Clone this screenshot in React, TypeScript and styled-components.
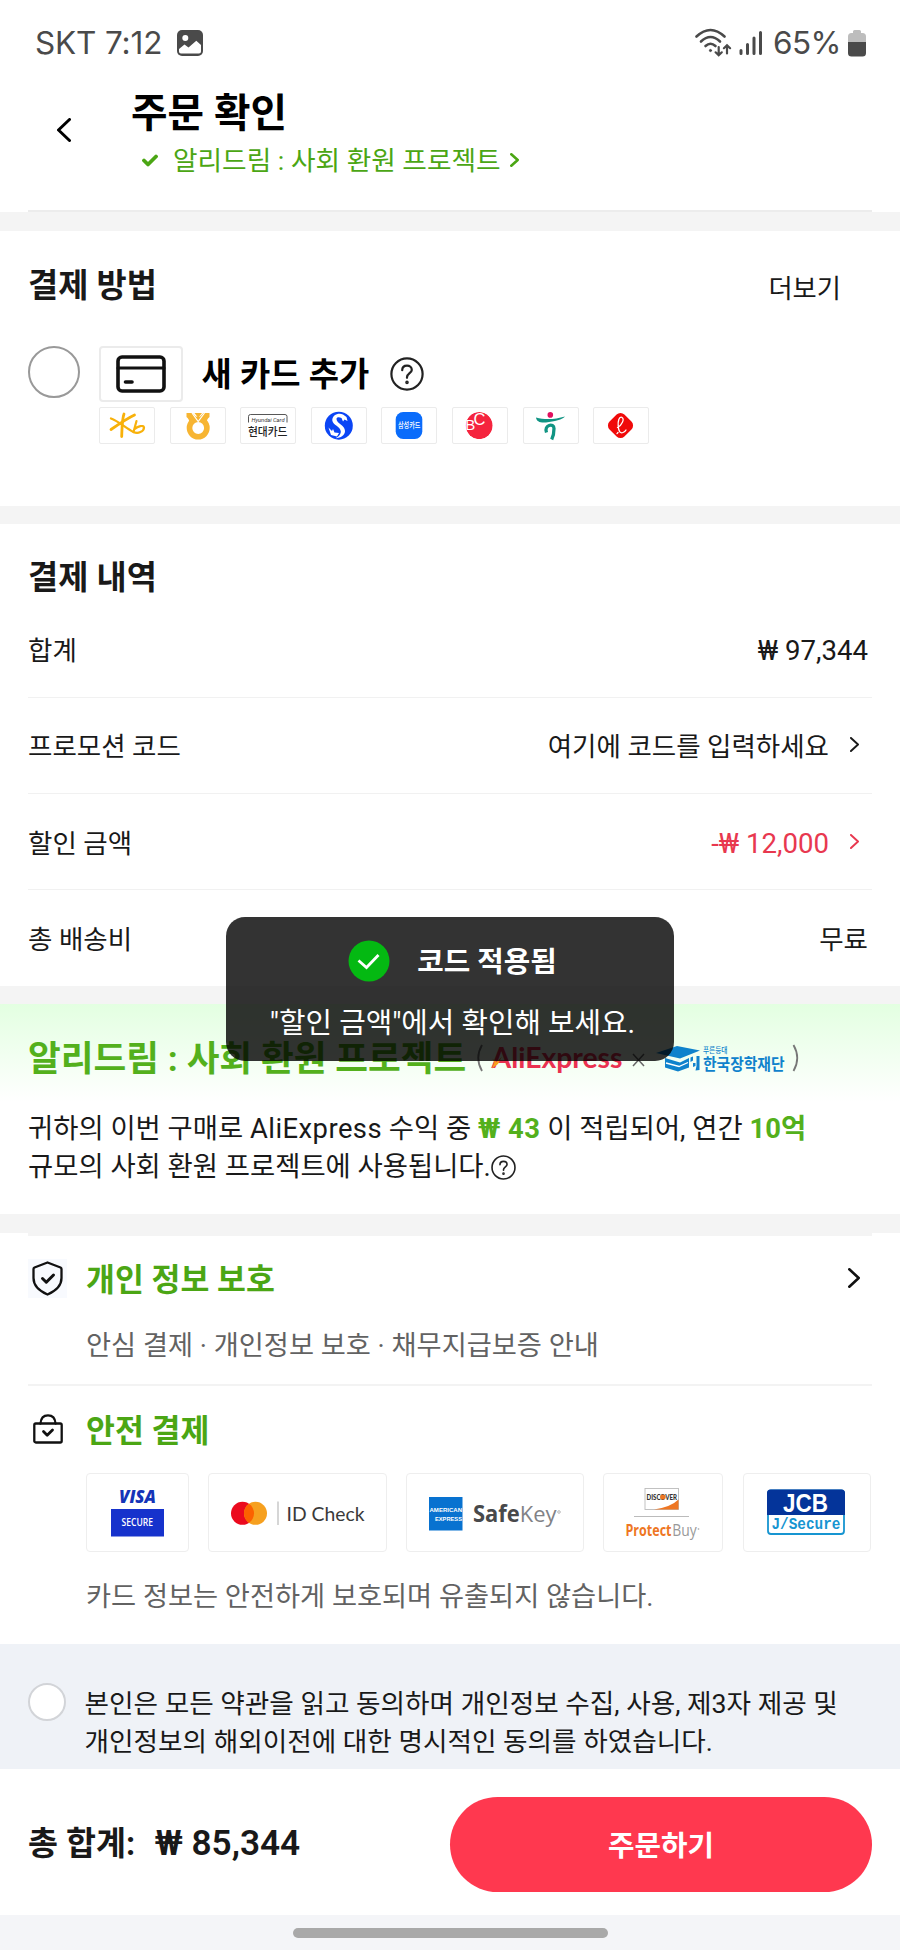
import React from 'react';
import styled, { createGlobalStyle } from 'styled-components';

const GlobalStyle = createGlobalStyle`
  * { box-sizing: border-box; }
  body {
    margin: 0;
    background: #fff;
    font-family: Roboto, "Noto Sans CJK KR", sans-serif;
    color: #191919;
  }
  svg { display: block; flex: none; }
`;

const KR = 'Roboto, "Noto Sans CJK KR", sans-serif';

const Screen = styled.div`
  width: 900px;
  height: 1950px;
  background: #fff;
  position: relative;
  overflow: hidden;
  display: flex;
  flex-direction: column;
  white-space: nowrap;
`;

const StatusBar = styled.header`
  height: 86px;
  flex: none;
  padding: 0 34px 0 35px;
  display: flex;
  align-items: center;
  justify-content: space-between;
  color: #4a4a4a;
  font-family: Inter, Roboto, sans-serif;
  font-size: 31.5px;
`;

const StatusGroup = styled.div<{ $gap: number }>`
  display: flex;
  align-items: center;
  gap: ${p => p.$gap}px;
`;

const StatusText = styled.span<{ $track: number; $left?: number }>`
  letter-spacing: ${p => p.$track}px;
  margin-left: ${p => p.$left ?? 0}px;
  line-height: 40px;
`;

const TitleBar = styled.div`
  height: 124px;
  flex: none;
  display: flex;
  padding-left: 57px;
`;

const BackButton = styled.div`
  width: 74px;
  padding-top: 32px;
`;

const TitleColumn = styled.div`
  display: flex;
  flex-direction: column;
`;

const PageTitle = styled.h1`
  margin: 4px 0 0;
  font-size: 39.7px;
  font-weight: 700;
  line-height: 48px;
  color: #000;
`;

const ProjectLink = styled.div`
  display: flex;
  align-items: center;
  height: 40px;
  margin-top: 2px;
  padding-left: 11px;
  font-size: 26.7px;
  color: #4ba614;
`;

const LinkLabel = styled.span`
  margin: 0 9px 0 15px;
  padding-bottom: 4px;
`;

const Inset = styled.div<{ $h: number; $color: string }>`
  height: ${p => p.$h}px;
  flex: none;
  margin: 0 28px;
  background: ${p => p.$color};
`;

const Band = styled.div<{ $h: number }>`
  height: ${p => p.$h}px;
  flex: none;
  background: #f4f4f4;
`;

const PaymentSection = styled.section`
  height: 275px;
  flex: none;
  padding: 33px 59px 0 28px;
`;

const SectionHead = styled.div`
  display: flex;
  justify-content: space-between;
  align-items: center;
  height: 44px;
`;

const SectionTitle = styled.h2`
  margin: 0;
  font-size: 32.8px;
  font-weight: 700;
  line-height: 44px;
`;

const MoreLink = styled.span`
  font-size: 26.3px;
`;

const MethodRow = styled.div`
  display: flex;
  margin-top: 38px;
`;

const Radio = styled.span<{ $size: number; $border: string }>`
  width: ${p => p.$size}px;
  height: ${p => p.$size}px;
  flex: none;
  border-radius: 50%;
  border: 2px solid ${p => p.$border};
  background: #fff;
`;

const MethodBody = styled.div`
  margin-left: 19px;
`;

const NewCard = styled.div`
  display: flex;
  align-items: center;
  height: 56px;
`;

const CardThumb = styled.div`
  width: 84px;
  height: 56px;
  border: 2px solid #ebebeb;
  border-radius: 4px;
  display: flex;
  align-items: center;
  justify-content: center;
`;

const MethodName = styled.span`
  margin: 0 21px 0 18.5px;
  padding-bottom: 5px;
  font-size: 32.9px;
  font-weight: 700;
  color: #000;
`;

const Issuers = styled.div`
  display: flex;
  gap: 14.6px;
  margin-top: 5px;
`;

const Issuer = styled.div`
  width: 56px;
  height: 37px;
  border: 1.5px solid #ebebeb;
  border-radius: 2px;
  svg { margin: -1px; }
`;

const SummarySection = styled.section`
  height: 462px;
  flex: none;
  padding: 32px 28px 0;
`;

const SummaryRow = styled.div<{ $h: number; $lift?: number; $last?: boolean }>`
  height: ${p => p.$h}px;
  display: flex;
  align-items: center;
  justify-content: space-between;
  padding-bottom: ${p => p.$lift ?? 0}px;
  font-size: 26.5px;
  border-bottom: ${p => (p.$last ? 'none' : '1.5px solid #f1f1f1')};
`;

const Value = styled.span<{ $color?: string; $end?: number }>`
  display: flex;
  align-items: center;
  gap: 21px;
  padding-right: ${p => p.$end ?? 4}px;
  color: ${p => p.$color ?? 'inherit'};
`;

const Figure = styled.span`
  padding-top: 3px;
  font-size: 27.6px;
`;

const DreamSection = styled.section`
  height: 210px;
  flex: none;
  padding: 29px 28px 0;
  background: linear-gradient(#e3ffe1 0, #fff 98px);
`;

const DreamHead = styled.div`
  display: flex;
  align-items: center;
  height: 50px;
`;

const DreamTitle = styled.h2`
  margin: 0;
  width: 448px;
  padding-bottom: 6px;
  font-size: 35.6px;
  font-weight: 700;
  color: #53b01c;
`;

const DreamText = styled.p`
  margin: 27px 0 0;
  font-size: 27.4px;
  line-height: 38px;
`;

const DreamLine = styled.span`
  display: flex;
  align-items: center;
  white-space: pre;
`;

const Brand = styled.span`
  letter-spacing: 0.45px;
`;

const Green = styled.b<{ $track?: number }>`
  color: #53b01c;
  letter-spacing: ${p => p.$track ?? 0}px;
`;

const PrivacySection = styled.section`
  height: 149.5px;
  flex: none;
  margin: 0 28px;
  padding-top: 22px;
  border-bottom: 2px solid #f3f3f3;
`;

const SafeSection = styled.section`
  height: 258.5px;
  flex: none;
  padding: 23px 28px 0;
`;

const GuardHead = styled.div<{ $end?: number }>`
  display: flex;
  align-items: center;
  height: 40px;
  padding-right: ${p => p.$end ?? 0}px;
`;

const IconTile = styled.div<{ $tint: string }>`
  width: 39px;
  height: 39px;
  display: flex;
  align-items: center;
  justify-content: center;
  background: ${p => p.$tint};
`;

const GuardTitle = styled.h3<{ $drop: number }>`
  margin: 0;
  padding: ${p => p.$drop}px 0 0 19px;
  flex: 1;
  font-size: 31.4px;
  font-weight: 700;
  line-height: 40px;
  color: #4ba614;
`;

const GuardNote = styled.p<{ $top: number }>`
  margin: ${p => p.$top}px 0 0 58px;
  font-size: 27.25px;
  line-height: 40px;
  color: #626262;
`;

const Badges = styled.div`
  display: flex;
  gap: 19.5px;
  margin: 24.5px 0 0 58px;
`;

const Badge = styled.div<{ $w: number }>`
  width: ${p => p.$w}px;
  height: 79px;
  flex: none;
  border: 1.5px solid #eee;
  border-radius: 4px;
  svg { margin: -1.5px; }
`;

const Terms = styled.section`
  height: 125px;
  flex: none;
  background: #eff2f7;
  display: flex;
  padding: 39px 28px 0;
`;

const TermsText = styled.p`
  margin: 2px 0 0 18.5px;
  font-size: 26.65px;
  line-height: 38px;
`;

const CheckoutBar = styled.footer`
  height: 146px;
  flex: none;
  padding: 28px 28px 0;
  display: flex;
  justify-content: space-between;
`;

const Total = styled.div`
  display: flex;
  align-items: baseline;
  gap: 19.5px;
  padding-top: 23px;
  font-size: 32.6px;
  line-height: 46px;
  font-weight: 700;
`;

const Amount = styled.span`
  font-weight: 600;
  font-size: 35.2px;
`;

const OrderButton = styled.button`
  width: 422px;
  height: 94.5px;
  border: none;
  border-radius: 48px;
  padding: 0 0 1px;
  background: #ff384f;
  color: #fff;
  font-family: inherit;
  font-size: 28.8px;
  font-weight: 700;
`;

const NavBar = styled.div`
  flex: 1;
  background: #f4f5f8;
  display: flex;
  justify-content: center;
  padding-top: 13px;
`;

const Handle = styled.div`
  width: 315px;
  height: 10px;
  border-radius: 5px;
  background: #a9a9a9;
`;

const Toast = styled.div`
  position: absolute;
  left: 225.5px;
  top: 917px;
  width: 448px;
  height: 144px;
  padding-left: 6px;
  border-radius: 19px;
  background: rgba(0, 0, 0, 0.8);
  color: #fff;
  font-size: 28.8px;
  display: flex;
  flex-direction: column;
  align-items: center;
`;

const ToastHead = styled.div`
  display: flex;
  align-items: center;
  gap: 27px;
  height: 42px;
  margin-top: 23px;
  font-weight: 700;
`;

const ToastTitle = styled.span`
  padding-bottom: 3px;
`;

const ToastBody = styled.div`
  margin-top: 20px;
  line-height: 42px;
`;

type ChevronProps = { w: number; h: number; stroke: number; color: string; left?: boolean };

const Chevron = ({ w, h, stroke, color, left }: ChevronProps) => {
  const p = stroke / 2;
  const d = left
    ? `M${w - p} ${p}L${p} ${h / 2}L${w - p} ${h - p}`
    : `M${p} ${p}L${w - p} ${h / 2}L${p} ${h - p}`;
  return (
    <svg width={w} height={h} viewBox={`0 0 ${w} ${h}`} fill="none">
      <path d={d} stroke={color} strokeWidth={stroke} strokeLinecap="round" strokeLinejoin="round" />
    </svg>
  );
};

const Question = ({ size, stroke }: { size: number; stroke: number }) => (
  <svg width={size} height={size} viewBox="0 0 34 34" fill="none" stroke="#222" strokeWidth={stroke} strokeLinecap="round">
    <circle cx="17" cy="17" r="15.6" />
    <path d="M12.2 13.2C12.2 10.3 14.3 8.6 17 8.6C19.8 8.6 21.8 10.4 21.8 12.9C21.8 15.9 17 16.6 17 20.2V20.8" />
    <circle cx="17" cy="25.4" r="0.7" fill="#222" />
  </svg>
);

const PhotoIcon = () => (
  <svg width="26" height="26" viewBox="0 0 26 26">
    <rect width="26" height="26" rx="5" fill="#4a4a4a" />
    <circle cx="8.3" cy="8" r="3" fill="#fff" />
    <path d="M2 19L7.5 14.5L11.5 17.5L19.3 10.7L24 15V21.5Q24 23.5 22 23.5H4Q2 23.5 2 21.5Z" fill="#fff" />
  </svg>
);

const WifiIcon = () => (
  <svg width="37" height="30" viewBox="0 0 37 30" fill="none" stroke="#4a4a4a" strokeWidth="2.6" strokeLinecap="round">
    <path d="M1.5 8.5Q15.5 -4.5 29.5 8.5" />
    <path d="M6 13.5Q15.5 4.5 25 13.5" />
    <path d="M10.5 18Q15.5 13.5 20.5 18" />
    <circle cx="15.5" cy="22.5" r="1.1" fill="#4a4a4a" strokeWidth="1" />
    <path d="M23.7 19V27M20.6 24.3L23.7 27.3L26.8 24.3M32 25.5V17.5M28.9 20.2L32 17.2L35.1 20.2" strokeWidth="2.2" />
  </svg>
);

const SignalIcon = () => (
  <svg width="24" height="26" viewBox="0 0 24 26" stroke="#4a4a4a" strokeWidth="3" strokeLinecap="round">
    <path d="M2 20.5V23.5M8.5 14.5V23.5M15 8V23.5M21.5 2.5V23.5" />
  </svg>
);

const BatteryIcon = () => (
  <svg width="18" height="27" viewBox="0 0 18 27">
    <path d="M0 12V6.5Q0 3 3.5 3H5V1.5Q5 0 6.5 0H11.5Q13 0 13 1.5V3H14.5Q18 3 18 6.5V12Z" fill="#bdbdbd" />
    <path d="M0 12H18V23Q18 26.5 14.5 26.5H3.5Q0 26.5 0 23Z" fill="#4a4a4a" />
  </svg>
);

const KB = () => (
  <svg width="56" height="37" viewBox="0 0 56 37" fill="none" stroke="#f8b10a" strokeLinecap="round" strokeLinejoin="round">
    <path d="M25 7C23 12 23 22 22.7 29.5" strokeWidth="2.8" />
    <path d="M12 11.5C19 14 27 21 34.5 25" strokeWidth="2.3" />
    <path d="M35.5 8C29 11 20 17 12 22.5" strokeWidth="2.8" />
    <path d="M37.5 14L34.5 25C39 27.3 45 24.5 45 20.5C44.500 17.5 39 19.500 35.500 22" strokeWidth="2.2" />
  </svg>
);

const NH = () => (
  <svg width="56" height="37" viewBox="0 0 56 37">
    <path d="M16.5 6H22.5L28 12L33.5 6H39.5V10Q36.500 12 36.500 17H19.500Q19.500 12 16.5 10Z" fill="#f7b532" />
    <circle cx="28.2" cy="21" r="8.7" fill="#fff" stroke="#f7b532" strokeWidth="5.6" />
    <path d="M22 6L28.2 14.5L34.5 6" fill="none" stroke="#fff" strokeWidth="1.2" />
    <path d="M24.5 6H32L28.2 11Z" fill="#f7b532" />
  </svg>
);

const Hyundai = () => (
  <svg width="56" height="37" viewBox="0 0 56 37">
    <path d="M8.5 15.5V9.5Q8.5 7.5 10.5 7.5H45Q47 7.5 47 9.5V15.5" fill="none" stroke="#444" strokeWidth="0.9" />
    <text x="11.5" y="14.6" fontFamily={KR} fontSize="6" fontStyle="italic" textLength="33" lengthAdjust="spacingAndGlyphs" fill="#333">Hyundai Card</text>
    <text x="8" y="28.5" fontFamily={KR} fontSize="11" fontWeight="500" textLength="39.5" lengthAdjust="spacingAndGlyphs" fill="#222">현대카드</text>
  </svg>
);

const Shinhan = () => (
  <svg width="56" height="37" viewBox="0 0 56 37">
    <circle cx="27.8" cy="18.7" r="14" fill="#0b45f5" />
    <path d="M32 7.500C27 5.500 21 8.500 21.300 13.500C21.800 18 29.500 19.500 29.800 24.500C29.800 28 27 30 24.500 31.300C30 31 34 28 34 24C34 18 25.500 16.500 25.500 12C25.500 10 28 9.500 30.500 11L32 14.500L33.500 12.500L36.500 14L35.500 10Z" fill="#fff" />
    <path d="M17.5 20.5L21 24L22 22L23.5 25.5L28 26L26 29.5L20 28Z" fill="#fff" />
  </svg>
);

const Samsung = () => (
  <svg width="56" height="37" viewBox="0 0 56 37">
    <rect x="14.7" y="5" width="26.6" height="27" rx="7.5" fill="#0a6cfb" />
    <text x="17" y="21.2" fontFamily={KR} fontSize="7.5" fontWeight="500" textLength="22.5" lengthAdjust="spacingAndGlyphs" fill="#fff">삼성카드</text>
  </svg>
);

const BC = () => (
  <svg width="56" height="37" viewBox="0 0 56 37">
    <clipPath id="bc-disc">
      <circle cx="27.2" cy="18.6" r="13.5" />
    </clipPath>
    <g clipPath="url(#bc-disc)">
      <circle cx="27.2" cy="18.6" r="13.5" fill="#f5243e" />
      <text fontFamily='"Liberation Sans", sans-serif' fontSize="15" fill="#fff">
        <tspan x="13.2" y="23">B</tspan>
        <tspan x="21.5" y="18" fontSize="16.5">C</tspan>
      </text>
    </g>
  </svg>
);

const Hana = () => (
  <svg width="56" height="37" viewBox="0 0 56 37">
    <circle cx="27.3" cy="7.9" r="2.8" fill="#e0105e" />
    <path d="M13 10.5C22 13 32 12.500 42 9.500C40 12.500 31 14.500 23 15.500C17 16 13.5 14.5 13 10.5Z" fill="#109483" />
    <path d="M23.500 25.5C20.5 18 31 15.500 31 21.5C31 26 30.5 29 28.7 32.500" fill="none" stroke="#109483" strokeWidth="3.3" />
  </svg>
);

const Lotte = () => (
  <svg width="56" height="37" viewBox="0 0 56 37">
    <rect x="17" y="8" width="21" height="21" rx="5.5" transform="rotate(45 27.5 18.5)" fill="#f00a0a" />
    <path d="M24.5 20.5C29 18.5 32 11.5 28.8 10.3C26 9.5 24.8 14 25.2 19C25.6 25 27.5 26.5 30 25.5C31.5 25 32.5 24 33 23M24 26.6L25 25.5" fill="none" stroke="#fff" strokeWidth="1.3" strokeLinecap="round" />
  </svg>
);

const PartnerLogos = () => (
  <svg width="330" height="40" viewBox="0 0 330 40">
    <g fill="none" stroke="#777" strokeWidth="1.8">
      <path d="M6 7Q-1.5 20 6 33M317.5 7Q325 20 317.5 33" />
      <path d="M157 16L168 28M168 16L157 28" stroke="#666" strokeWidth="1.5" />
    </g>
    <text x="15.5" y="29.5" fontFamily="Lato, Roboto, sans-serif" fontSize="28" fontWeight="700" textLength="131" lengthAdjust="spacingAndGlyphs" fill="#ea3150">AliExpress</text>
    <path d="M16 20.5L20.5 24L26 18.5L22 26L16 30.5L18.5 24Z" fill="#f7a11b" />
    <g fill="#0f82cc">
      <path d="M180 15L201 8L224 12.5L204 20.5Z" />
      <path d="M189 20L204 24.5L213 20V29.5L202 33.5L189 29.5Z" />
      <path d="M214.500 19.500L217 18.500V22.500L214.500 24ZM217 25H219.500V28L217 29ZM220.500 18H223.5V32L219.500 32.500L220.500 28Z" />
      <path d="M190 25L203 28.5L212 24.5" fill="none" stroke="#fff" strokeWidth="1.3" />
    </g>
    <text x="227" y="15" fontFamily={KR} fontSize="7.5" fontWeight="500" textLength="24.5" lengthAdjust="spacingAndGlyphs" fill="#0f82cc">푸른등대</text>
    <text x="227" y="31.5" fontFamily={KR} fontSize="16" fontWeight="700" textLength="81.5" lengthAdjust="spacingAndGlyphs" fill="#0f82cc">한국장학재단</text>
  </svg>
);

const ShieldIcon = () => (
  <svg width="31" height="35" viewBox="0 0 31 35" fill="none" stroke="#111" strokeWidth="2.3" strokeLinecap="round" strokeLinejoin="round">
    <path d="M15.5 1.5L28.5 6.5Q29.5 7 29.5 8V17C29.5 25 22.5 30.5 15.5 33.5C8.5 30.5 1.5 25 1.5 17V8Q1.5 7 2.5 6.5Z" />
    <path d="M10.5 17.5L14.3 21.2L21.5 14" strokeWidth="3" />
  </svg>
);

const BagIcon = () => (
  <svg width="30" height="30" viewBox="0 0 30 30" fill="none" stroke="#111" strokeWidth="2.3" strokeLinecap="round" strokeLinejoin="round">
    <rect x="1.3" y="9.5" width="27.4" height="19" rx="1.5" />
    <path d="M7.5 9.5Q8 1.3 15 1.3Q22 1.3 22.5 9.5" />
    <path d="M10.5 17.5L14.2 21.2L19.5 16" strokeWidth="2.8" />
  </svg>
);

const VisaBadge = () => (
  <svg width="102.5" height="79" viewBox="0 0 102.5 79">
    <text x="33" y="29.5" fontFamily='"Open Sans", sans-serif' fontSize="17.5" fontWeight="800" fontStyle="italic" textLength="37" lengthAdjust="spacingAndGlyphs" fill="#1434b8">VISA</text>
    <rect x="25" y="36" width="53" height="27.5" fill="#1632cc" />
    <text x="35.5" y="52.8" fontFamily='"Open Sans", sans-serif' fontSize="9.8" fontWeight="600" textLength="31.5" lengthAdjust="spacingAndGlyphs" fill="#fff">SECURE</text>
  </svg>
);

const MastercardBadge = () => (
  <svg width="178.5" height="79" viewBox="0 0 178.5 79">
    <circle cx="34.5" cy="40.3" r="11.5" fill="#eb0a1e" />
    <circle cx="47.5" cy="40.3" r="11.5" fill="#f6a01f" />
    <path d="M41 30.8A11.5 11.5 0 0 1 41 49.8A11.5 11.5 0 0 1 41 30.8Z" fill="#fc6100" />
    <path d="M70 28.5V52" stroke="#bbb" strokeWidth="1.2" />
    <text x="78.5" y="47.5" fontFamily="Lato, sans-serif" fontSize="19.5" textLength="78" lengthAdjust="spacingAndGlyphs" fill="#3a3a3a">ID Check</text>
  </svg>
);

const AmexBadge = () => (
  <svg width="177.5" height="79" viewBox="0 0 177.5 79">
    <rect x="23" y="24" width="33.5" height="33.5" fill="#0872d0" />
    <g fontFamily='"Liberation Sans", sans-serif' fontWeight="700" fill="#fff" fontSize="6">
      <text x="23.5" y="39.2" textLength="32.5" lengthAdjust="spacingAndGlyphs">AMERICAN</text>
      <text x="29" y="47.8" textLength="27" lengthAdjust="spacingAndGlyphs">EXPRESS</text>
    </g>
    <text x="67" y="48.5" fontFamily='"Open Sans", sans-serif' fontSize="22.5" textLength="83.5" lengthAdjust="spacingAndGlyphs">
      <tspan fontWeight="700" fill="#48494b">Safe</tspan>
      <tspan fontWeight="400" fill="#818286">Key</tspan>
    </text>
    <circle cx="153" cy="39" r="1.3" fill="none" stroke="#999" strokeWidth="0.7" />
  </svg>
);

const DiscoverBadge = () => (
  <svg width="120" height="79" viewBox="0 0 120 79">
    <rect x="42" y="15.5" width="33.5" height="21" fill="#fff" stroke="#bbb" strokeWidth="0.9" />
    <path d="M75.5 26.5V36.5H51Q68 34 75.5 26.5Z" fill="#ee7623" />
    <text x="43.5" y="26.5" fontFamily="Lato, sans-serif" fontSize="7.3" fontWeight="900" textLength="30.5" lengthAdjust="spacingAndGlyphs" fill="#333">DISCOVER</text>
    <circle cx="60" cy="24" r="2.6" fill="#ee7623" />
    <path d="M31 43.5H86" stroke="#bbb" strokeWidth="1.2" />
    <text x="22.5" y="62.5" fontFamily='"Open Sans", sans-serif' fontSize="15.5" fontWeight="700" textLength="46" lengthAdjust="spacingAndGlyphs" fill="#ee7623">Protect</text>
    <text x="69.2" y="62.5" fontFamily='"Open Sans", sans-serif' fontSize="15.5" textLength="24.5" lengthAdjust="spacingAndGlyphs" fill="#999">Buy</text>
    <circle cx="95.5" cy="56" r="0.9" fill="#bbb" />
  </svg>
);

const JcbBadge = () => (
  <svg width="128" height="79" viewBox="0 0 128 79">
    <rect x="26" y="17.5" width="76" height="43.5" rx="3" fill="#fff" stroke="#1795d1" strokeWidth="1.8" />
    <path d="M25 42V20Q25 16.5 28.5 16.5H99.5Q103 16.5 103 20V42Z" fill="#04349a" />
    <text x="41" y="38.5" fontFamily='"Liberation Sans", sans-serif' fontSize="25" fontWeight="700" textLength="45" lengthAdjust="spacingAndGlyphs" fill="#fff">JCB</text>
    <text x="29.5" y="56.3" fontFamily='"Liberation Mono", monospace' fontSize="16.5" fontWeight="700" textLength="69" lengthAdjust="spacingAndGlyphs" fill="#1795d1">J/Secure</text>
  </svg>
);

const issuers = [KB, NH, Hyundai, Shinhan, Samsung, BC, Hana, Lotte];

const badges: [React.FC, number][] = [
  [VisaBadge, 102.5],
  [MastercardBadge, 178.5],
  [AmexBadge, 177.5],
  [DiscoverBadge, 120],
  [JcbBadge, 128],
];

export default function App() {
  return (
    <>
      <GlobalStyle />
      <Screen lang="ko">
        <StatusBar>
          <StatusGroup $gap={15}>
            <StatusText $track={-0.15}>SKT 7:12</StatusText>
            <PhotoIcon />
          </StatusGroup>
          <StatusGroup $gap={7}>
            <WifiIcon />
            <SignalIcon />
            <StatusText $track={-0.5} $left={3}>65%</StatusText>
            <BatteryIcon />
          </StatusGroup>
        </StatusBar>
        <TitleBar>
          <BackButton>
            <Chevron w={14} h={24} stroke={3} color="#000" left />
          </BackButton>
          <TitleColumn>
            <PageTitle>주문 확인</PageTitle>
            <ProjectLink>
              <svg width="16" height="13" viewBox="0 0 16 13" fill="none">
                <path d="M2 6.5L6 10.5L14 2.5" stroke="#4ba614" strokeWidth="3.8" strokeLinecap="round" strokeLinejoin="round" />
              </svg>
              <LinkLabel>알리드림 : 사회 환원 프로젝트</LinkLabel>
              <Chevron w={9} h={14} stroke={2.6} color="#4ba614" />
            </ProjectLink>
          </TitleColumn>
        </TitleBar>
        <Inset $h={2} $color="#ececec" />
        <Band $h={19} />

        <PaymentSection>
          <SectionHead>
            <SectionTitle>결제 방법</SectionTitle>
            <MoreLink>더보기</MoreLink>
          </SectionHead>
          <MethodRow>
            <Radio $size={52} $border="#999" />
            <MethodBody>
              <NewCard>
                <CardThumb>
                  <svg width="50" height="38" viewBox="0 0 50 38" fill="none" stroke="#111" strokeWidth="3.6" strokeLinecap="round">
                    <rect x="2" y="2" width="46" height="34" rx="4" />
                    <path d="M2 13H48" strokeWidth="3" />
                    <path d="M9.5 27H16" />
                  </svg>
                </CardThumb>
                <MethodName>새 카드 추가</MethodName>
                <Question size={34} stroke={2.2} />
              </NewCard>
              <Issuers>
                {issuers.map((Logo, i) => (
                  <Issuer key={i}>
                    <Logo />
                  </Issuer>
                ))}
              </Issuers>
            </MethodBody>
          </MethodRow>
        </PaymentSection>
        <Band $h={18} />

        <SummarySection>
          <SectionTitle>결제 내역</SectionTitle>
          <SummaryRow $h={98}>
            <span>합계</span>
            <Value>
              <Figure>₩ 97,344</Figure>
            </Value>
          </SummaryRow>
          <SummaryRow $h={96} $lift={2}>
            <span>프로모션 코드</span>
            <Value $end={13}>
              여기에 코드를 입력하세요
              <Chevron w={9} h={15} stroke={1.9} color="#191919" />
            </Value>
          </SummaryRow>
          <SummaryRow $h={96}>
            <span>할인 금액</span>
            <Value $end={13} $color="#e8384f">
              <Figure>-₩ 12,000</Figure>
              <Chevron w={9} h={15} stroke={1.9} color="#e8384f" />
            </Value>
          </SummaryRow>
          <SummaryRow $h={96} $lift={2} $last>
            <span>총 배송비</span>
            <Value>무료</Value>
          </SummaryRow>
        </SummarySection>
        <Band $h={18} />

        <DreamSection>
          <DreamHead>
            <DreamTitle>알리드림 : 사회 환원 프로젝트</DreamTitle>
            <PartnerLogos />
          </DreamHead>
          <DreamText>
            <DreamLine>
              귀하의 이번 구매로 <Brand>AliExpress</Brand> 수익 중 <Green $track={0.5}>₩ 43</Green> 이 적립되어, 연간 <Green>10억</Green>
            </DreamLine>
            <DreamLine>
              규모의 사회 환원 프로젝트에 사용됩니다.
              <Question size={25} stroke={2.2} />
            </DreamLine>
          </DreamText>
        </DreamSection>
        <Band $h={19} />
        <Inset $h={3} $color="#f4f4f4" />

        <PrivacySection>
          <GuardHead $end={12}>
            <IconTile $tint="#f8fafe">
              <ShieldIcon />
            </IconTile>
            <GuardTitle $drop={5}>개인 정보 보호</GuardTitle>
            <Chevron w={12} h={20} stroke={2.6} color="#111" />
          </GuardHead>
          <GuardNote $top={28}>안심 결제 · 개인정보 보호 · 채무지급보증 안내</GuardNote>
        </PrivacySection>

        <SafeSection>
          <GuardHead>
            <IconTile $tint="transparent">
              <BagIcon />
            </IconTile>
            <GuardTitle $drop={6}>안전 결제</GuardTitle>
          </GuardHead>
          <Badges>
            {badges.map(([Logo, w]) => (
              <Badge key={w} $w={w}>
                <Logo />
              </Badge>
            ))}
          </Badges>
          <GuardNote $top={25}>카드 정보는 안전하게 보호되며 유출되지 않습니다.</GuardNote>
        </SafeSection>

        <Terms>
          <Radio $size={38} $border="#d2d4d8" />
          <TermsText>
            본인은 모든 약관을 읽고 동의하며 개인정보 수집, 사용, 제3자 제공 및
            <br />
            개인정보의 해외이전에 대한 명시적인 동의를 하였습니다.
          </TermsText>
        </Terms>

        <CheckoutBar>
          <Total>
            <span>총 합계:</span>
            <Amount>₩ 85,344</Amount>
          </Total>
          <OrderButton>주문하기</OrderButton>
        </CheckoutBar>
        <NavBar>
          <Handle />
        </NavBar>

        <Toast>
          <ToastHead>
            <svg width="42" height="42" viewBox="0 0 42 42" fill="none">
              <circle cx="21" cy="21" r="20.5" fill="#04b912" />
              <path d="M10.5 20.5L18.5 27.5L30.5 15" stroke="#fff" strokeWidth="2.8" />
            </svg>
            <ToastTitle>코드 적용됨</ToastTitle>
          </ToastHead>
          <ToastBody>"할인 금액"에서 확인해 보세요.</ToastBody>
        </Toast>
      </Screen>
    </>
  );
}
